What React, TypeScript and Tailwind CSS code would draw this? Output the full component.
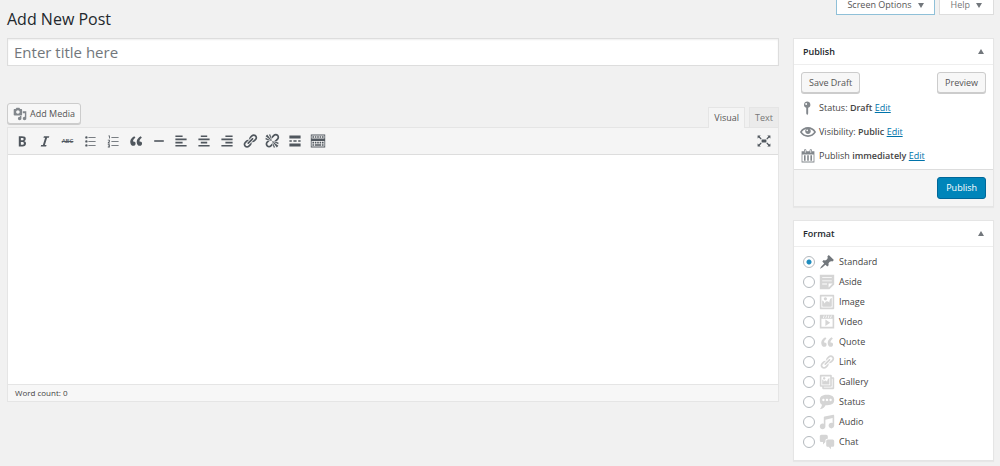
import { useState } from "react";
import type { ReactNode } from "react";

const paths = {
  bold: "M6 4v13h4.54c1.37 0 2.46-.33 3.26-1 .8-.66 1.2-1.58 1.2-2.77 0-.84-.17-1.51-.51-2.01s-.9-.85-1.67-1.03v-.09c.57-.1 1.02-.4 1.36-.9s.51-1.13.51-1.91c0-1.14-.39-1.98-1.17-2.5C12.75 4.26 11.5 4 9.78 4H6zm2.57 5.15V6.26h1.36c.73 0 1.27.11 1.61.32.34.22.51.58.51 1.07 0 .54-.16.92-.47 1.15s-.82.35-1.51.35h-1.5zm0 2.19h1.6c1.44 0 2.16.53 2.16 1.61 0 .6-.17 1.05-.51 1.34s-.86.43-1.57.43H8.57v-3.38z",
  italic: "M14.78 6h-2.13l-2.8 9h2.12l-.62 2H4.6l.62-2h2.14l2.8-9H8.03l.62-2h6.75z",
  ul: "M5.5 7a1.5 1.5 0 1 1 0-3 1.5 1.5 0 0 1 0 3zM8 5h9v1H8zM5.5 12a1.5 1.5 0 1 1 0-3 1.5 1.5 0 0 1 0 3zM8 10h9v1H8zM5.5 17a1.5 1.5 0 1 1 0-3 1.5 1.5 0 0 1 0 3zM8 15h9v1H8z",
  ol: "M4.5 3H6v4H5V4H4zM8 5h9v1H8zM8 10h9v1H8zM8 15h9v1H8zM3.5 8.5H6V11l-1.300 1H6v1H3.500v-1.200L5 10.400V9.500H3.500zM3.500 14H6v4H3.500v-1H5v-.500H4v-1h1V15H3.500z",
  quote: "M9.49 13.22c0-.74-.2-1.38-.61-1.9-.62-.78-1.83-.88-2.53-.72-.29-1.65 1.11-3.75 2.92-4.65L7.88 4c-2.73 1.3-5.42 4.28-4.96 8.05C3.21 14.43 4.59 16 6.54 16c.85 0 1.56-.25 2.12-.75s.83-1.18.83-2.03zm8.05 0c0-.74-.2-1.38-.61-1.9-.63-.78-1.83-.88-2.53-.72-.29-1.65 1.11-3.75 2.92-4.65L15.93 4c-2.73 1.3-5.41 4.28-4.95 8.05.29 2.38 1.66 3.95 3.61 3.95.85 0 1.56-.25 2.12-.75s.83-1.18.83-2.03z",
  hr: "M4 9h12v2H4z",
  left: "M12 5V3H3v2h9zm5 4V7H3v2h14zm-5 4v-2H3v2h9zm5 4v-2H3v2h14z",
  center: "M14 5V3H6v2h8zm3 4V7H3v2h14zm-3 4v-2H6v2h8zm3 4v-2H3v2h14z",
  right: "M17 5V3H8v2h9zm0 4V7H3v2h14zm0 4v-2H8v2h9zm0 4v-2H3v2h14z",
  link: "M17.74 2.76c1.68 1.69 1.68 4.41 0 6.1l-1.53 1.52c-1.12 1.12-2.7 1.47-4.14 1.09l2.62-2.61.76-.77.76-.76c.84-.84.84-2.2 0-3.04-.84-.85-2.2-.85-3.04 0l-.77.76-3.38 3.38c-.37-1.44-.02-3.02 1.1-4.14l1.52-1.53c1.69-1.68 4.42-1.68 6.1 0zM8.59 13.43l5.34-5.34c.42-.42.42-1.1 0-1.52-.44-.43-1.13-.39-1.53 0l-5.33 5.34c-.42.42-.42 1.1 0 1.52.44.43 1.13.39 1.52 0zm-.76 2.29l4.14-4.15c.38 1.44.03 3.02-1.09 4.14l-1.52 1.53c-1.69 1.68-4.41 1.68-6.1 0-1.68-1.68-1.68-4.42 0-6.1l1.53-1.52c1.12-1.12 2.7-1.47 4.14-1.1l-4.14 4.15c-.85.84-.85 2.2 0 3.05.84.84 2.2.84 3.04 0z",
  unlink: "M17.74 2.26c1.68 1.69 1.68 4.41 0 6.1l-1.53 1.52c-.32.33-.69.58-1.08.77L13 10l1.69-1.64.76-.77.76-.76c.84-.84.84-2.2 0-3.04-.84-.85-2.2-.85-3.04 0l-.77.76-.76.76L10 7l-.65-2.14c.19-.38.44-.75.77-1.07l1.52-1.53c1.69-1.68 4.42-1.68 6.1 0zM2 4l8 6-6-8zm4-2l4 8-2-8H6zM2 6l8 4-8-2V6zm7.36 7.69L10 13l.74 2.35-1.38 1.39c-1.69 1.68-4.41 1.68-6.1 0-1.68-1.68-1.68-4.42 0-6.1l1.39-1.38L7 10l-.69.64-1.52 1.53c-.85.84-.85 2.2 0 3.04.84.85 2.2.85 3.04 0zM18 16l-8-6 6 8zm-4 2l-4-8 2 8h2zm4-4l-8-4 8 2v2z",
  more: "M17 7V3H3v4h14zM6 11V9H3v2h3zm6 0V9H8v2h4zm5 0V9h-3v2h3zm0 6v-4H3v4h14z",
  sink: "M19 2v6H1V2zm-1 5V3H2v4zM3 4h2v2H3zM6 4h2v2H6zM9 4h2v2H9zM12 4h2v2h-2zM15 4h2v2h-2zM19 8v10H1V8zm-1 9v-7H2v7zM3 11h2v2H3zM6 11h2v2H6zM9 11h2v2H9zM12 11h2v2h-2zM15 11h2v2h-2zM3 14h2v2H3zM6 14h8v2H6zM15 14h2v2h-2z",
  expand: "M6 3H2v4l1.500-1.500L6 8l1-1-2.500-2.500zM14 3l1.500 1.500L13 7l1 1 2.500-2.500L18 7V3zM14 12l-1 1 2.500 2.500L14 17h4v-4l-1.500 1.500zM6 12l-2.500 2.500L2 13v4h4l-1.500-1.500L7 13zM7 8h6v4H7z",
  media: "M13 11V4c0-.55-.45-1-1-1h-1.67L9 1H5L3.67 3H2c-.55 0-1 .45-1 1v7c0 .55.45 1 1 1h10c.55 0 1-.45 1-1zM7 4.5c1.38 0 2.5 1.12 2.5 2.5S8.38 9.5 7 9.5 4.5 8.38 4.5 7 5.62 4.5 7 4.5zM14 6h5v10.5c0 1.38-1.12 2.5-2.5 2.5S14 17.88 14 16.5s1.12-2.5 2.5-2.5c.17 0 .34.02.5.05V9h-3V6zm-4 8.05V13h2v3.5c0 1.38-1.12 2.5-2.5 2.5S7 17.88 7 16.5 8.12 14 9.5 14c.17 0 .34.02.5.05z",
  status: "M9 2a4 4 0 0 1 1.200 7.800V17L9 19l-1.200-2V9.800A4 4 0 0 1 9 2zM7.700 3.800a1.200 1.200 0 1 0 0 2.400 1.200 1.200 0 0 0 0-2.400z",
  eye: "M19.7 9.4C17.7 6 14 3.9 10 3.9S2.3 6 .3 9.4L0 10l.3.6c2 3.4 5.7 5.5 9.7 5.5s7.7-2.1 9.7-5.5l.3-.6-.3-.6zM10 14.1c-3.1 0-6-1.600-7.700-4.100C3.600 8 5.700 6.600 8 6.100c-.9.6-1.5 1.7-1.500 2.900 0 1.900 1.600 3.500 3.500 3.500s3.500-1.600 3.500-3.500c0-1.200-.6-2.300-1.500-2.900 2.300.5 4.400 1.900 5.700 3.900-1.700 2.500-4.600 4.100-7.700 4.100zM9 7a1 1 0 1 0 0 2 1 1 0 0 0 0-2z",
  calendar: "M15 4h3v14H2V4h3V3c0-.83.67-1.5 1.5-1.5S8 2.170 8 3v1h4V3c0-.83.67-1.5 1.5-1.5S15 2.170 15 3v1zM6 3v2.500c0 .28.22.5.5.5s.5-.22.5-.5V3c0-.28-.22-.5-.5-.5S6 2.720 6 3zm7 0v2.500c0 .28.22.5.5.5s.5-.22.5-.5V3c0-.28-.22-.5-.5-.5s-.5.22-.5.5zm4 14V8H3v9h14zM7 16V9H5v7h2zm4 0V9H9v7h2zm4 0V9h-2v7h2z",
  pin: "M10.44 3.02l1.82-1.82 6.36 6.35-1.83 1.82c-1.05-.68-2.48-.57-3.41.36l-.75.75c-.92.93-1.04 2.35-.35 3.41l-1.83 1.82-2.41-2.41-2.8 2.79c-.42.42-3.38 2.71-3.8 2.29s1.86-3.39 2.28-3.81l2.79-2.79L4.1 9.36l1.83-1.82c1.05.69 2.48.57 3.4-.36l.75-.75c.93-.92 1.05-2.35.36-3.41z",
  aside: "M1 1h18v12l-6 6H1V1zm3 3v1h12V4H4zm0 4v1h12V8H4zm6 5v-1H4v1h6zm2 4l5-5h-5v5z",
  image: "M2.25 1h15.5c.69 0 1.25.56 1.25 1.25v15.5c0 .69-.56 1.25-1.25 1.25H2.25C1.56 19 1 18.44 1 17.75V2.25C1 1.56 1.56 1 2.25 1zM17 17V3H3v14h14zM10 6c0-1.1-.9-2-2-2s-2 .9-2 2 .9 2 2 2 2-.9 2-2zm3 5s0-6 3-6v10c0 .55-.45 1-1 1H5c-.55 0-1-.45-1-1V8c2 0 3 4 3 4s1-3 3-3 3 2 3 2z",
  video: "M2 1h16c.55 0 1 .45 1 1v16l-18-.02V2c0-.55.45-1 1-1zm4 1L5 5h1l1-3H6zm4 0H9L8 5h1zm3 0h-1l-1 3h1zm3 0h-1l-1 3h1zm1 14V6H3v10h14zM8 7l6 4-6 4V7z",
  gallery: "M16 4h1.96c.57 0 1.04.47 1.04 1.04v12.92c0 .57-.47 1.04-1.04 1.04H5.04C4.47 19 4 18.53 4 17.96V16H2.04C1.47 16 1 15.53 1 14.96V2.04C1 1.47 1.47 1 2.04 1h12.92c.57 0 1.04.47 1.04 1.04V4zM3 14h11V3H3v11zm5-8.5C8 4.67 7.33 4 6.5 4S5 4.67 5 5.5 5.67 7 6.5 7 8 6.33 8 5.5zm2 4.5s1-5 3-5v8H4V7c2 0 2 3 2 3s.33-2 2-2 2 2 2 2zm7 7V6h-1v8.96c0 .57-.47 1.04-1.04 1.04H6v1h11z",
  bubble: "M10 1c7 0 9 2.91 9 6.5S17 14 10 14c-.65 0-1.26-.03-1.85-.08C7.29 15.86 5.22 18.57 1 19c1.41-.95 2.27-3.24 2.77-5.45C1.58 12.47 1 10.13 1 7.5 1 3.91 3 1 10 1zM5.5 9C6.33 9 7 8.33 7 7.5S6.33 6 5.5 6 4 6.67 4 7.5 4.67 9 5.5 9zM10 9c.83 0 1.5-.67 1.5-1.5S10.83 6 10 6s-1.5.67-1.5 1.5S9.17 9 10 9zm4.5 0c.83 0 1.5-.67 1.5-1.5S15.33 6 14.5 6 13 6.67 13 7.5 13.67 9 14.5 9z",
  audio: "M6.99 3.08l11.02-2c.55-.08.99.45.99 1V14.5c0 1.94-1.57 3.5-3.5 3.5S12 16.44 12 14.5c0-1.93 1.57-3.5 3.5-3.5.54 0 1.04.14 1.5.35V5.08l-9 2V16c-.24 1.7-1.74 3-3.5 3C2.57 19 1 17.44 1 15.5 1 13.57 2.57 12 4.5 12c.54 0 1.04.14 1.5.35V4.08c0-.55.44-.91.99-1z",
  chat: "M11 6h-.82C9.07 6 8 7.2 8 8.16V10l-3 3v-3H3c-1.1 0-2-.9-2-2V3c0-1.1.9-2 2-2h6c1.1 0 2 .9 2 2v3zm0 1h6c1.1 0 2 .9 2 2v5c0 1.1-.9 2-2 2h-2v3l-3-3h-1c-1.1 0-2-.9-2-2V9c0-1.1.9-2 2-2z",
};

type IconName = keyof typeof paths;

const Icon = ({ name, className = "h-4 w-4" }: { name: IconName; className?: string }) => (
  <svg viewBox="0 0 20 20" fill="currentColor" fillRule="evenodd" className={`shrink-0 ${className}`} aria-hidden="true">
    <path d={paths[name]} />
  </svg>
);

const tools: { label: string; icon?: IconName }[] = [
  { label: "Bold", icon: "bold" },
  { label: "Italic", icon: "italic" },
  { label: "Strikethrough" },
  { label: "Bulleted list", icon: "ul" },
  { label: "Numbered list", icon: "ol" },
  { label: "Blockquote", icon: "quote" },
  { label: "Horizontal line", icon: "hr" },
  { label: "Align left", icon: "left" },
  { label: "Align center", icon: "center" },
  { label: "Align right", icon: "right" },
  { label: "Insert link", icon: "link" },
  { label: "Remove link", icon: "unlink" },
  { label: "Read more", icon: "more" },
  { label: "Toolbar toggle", icon: "sink" },
];

const formats: { name: string; icon: IconName }[] = [
  { name: "Standard", icon: "pin" },
  { name: "Aside", icon: "aside" },
  { name: "Image", icon: "image" },
  { name: "Video", icon: "video" },
  { name: "Quote", icon: "quote" },
  { name: "Link", icon: "link" },
  { name: "Gallery", icon: "gallery" },
  { name: "Status", icon: "bubble" },
  { name: "Audio", icon: "audio" },
  { name: "Chat", icon: "chat" },
];

const publishRows: { icon: IconName; label: string; value: string }[] = [
  { icon: "status", label: "Status:", value: "Draft" },
  { icon: "eye", label: "Visibility:", value: "Public" },
  { icon: "calendar", label: "Publish", value: "immediately" },
];

const Triangle = ({ up = false }: { up?: boolean }) => (
  <svg viewBox="0 0 6 5" fill="currentColor" className="h-[5px] w-[6px] text-[#72777c]" aria-hidden="true">
    <path d={up ? "M3 0l3 5H0z" : "M0 0h6L3 5z"} />
  </svg>
);

const button = "h-[21px] rounded-[3px] border border-[#ccc] bg-[#f7f7f7] text-[#555] shadow-[0_1px_0_#ccc]";

const Panel = ({ title, children }: { title: string; children: ReactNode }) => (
  <section className="border border-[#e5e5e5] bg-white shadow-[0_1px_1px_rgba(0,0,0,0.04)]">
    <header className="flex h-[26px] items-center justify-between border-b border-[#eee] px-[9px]">
      <h2 className="font-semibold text-[#23282d]">{title}</h2>
      <button type="button" aria-label={`Toggle ${title}`}>
        <Triangle up />
      </button>
    </header>
    {children}
  </section>
);

const Editor = () => (
  <div>
    <div className="mt-[37px] flex items-end justify-between">
      <button type="button" className={`${button} mb-[3px] flex items-center gap-[3px] px-[5px]`}>
        <Icon name="media" className="h-[14px] w-[14px] text-[#82878c]" />
        Add Media
      </button>
      <div className="flex items-end gap-1">
        <button type="button" className="relative -mb-px h-[21px] border border-b-0 border-[#e5e5e5] bg-[#f5f5f5] px-[5px] text-[#555]">Visual</button>
        <button type="button" className="h-5 border border-b-0 border-[#e5e5e5] bg-[#ebebeb] px-[5px] text-[#777]">Text</button>
      </div>
    </div>
    <div className="border border-[#e5e5e5] bg-white">
      <div className="flex h-[27px] items-center justify-between border-b border-[#ddd] bg-[#f5f5f5] px-1.5 text-[#50575e]">
        <div className="flex w-[312px] justify-between">
          {tools.map((tool) => (
            <button key={tool.label} type="button" aria-label={tool.label} className="flex h-4 w-4 items-center justify-center">
              {tool.icon ? <Icon name={tool.icon} /> : <span className="text-[6px] font-semibold line-through">ABC</span>}
            </button>
          ))}
        </div>
        <button type="button" aria-label="Distraction-free writing mode">
          <Icon name="expand" />
        </button>
      </div>
      <textarea aria-label="Post content" className="block h-[229px] w-full resize-none p-2 outline-none" />
      <div className="h-[17px] border-t border-[#e5e5e5] bg-[#f7f7f7] px-[7px] text-[8px] leading-4">Word count: 0</div>
    </div>
  </div>
);

export default function App() {
  const [format, setFormat] = useState("Standard");

  return (
    <div className="min-h-screen bg-[#f1f1f1] pr-1.5 pb-1.5 pl-[7px] font-['Open_Sans','Noto_Sans',sans-serif] text-[9px] leading-4 text-[#444]">
      <header className="flex h-[38px] items-start justify-between">
        <h1 className="self-center text-[16px] leading-6 text-[#23282d]">Add New Post</h1>
        <div className="flex gap-1 leading-[10px]">
          <button type="button" className="flex items-center gap-1.5 border border-t-0 border-[#8fc0d8] bg-white px-[10px] pb-1 text-[#555]">
            Screen Options <Triangle />
          </button>
          <button type="button" className="flex items-center gap-1.5 border border-t-0 border-[#ddd] bg-white px-[11px] pb-1 text-[#777]">
            Help <Triangle />
          </button>
        </div>
      </header>

      <div className="flex items-start gap-[14px]">
        <main className="min-w-0 flex-1">
          <input
            type="text"
            aria-label="Post title"
            placeholder="Enter title here"
            className="block h-7 w-full border border-[#ddd] bg-white px-1.5 text-[15px] shadow-[inset_0_1px_2px_rgba(0,0,0,0.07)] outline-none placeholder:text-[#72777c]"
          />
          <Editor />
        </main>

        <aside className="flex w-[201px] shrink-0 flex-col gap-[13px]">
          <Panel title="Publish">
            <div className="flex justify-between px-[7px] pt-[7px]">
              <button type="button" className={`${button} px-[7px]`}>Save Draft</button>
              <button type="button" className={`${button} px-[7px]`}>Preview</button>
            </div>
            <ul className="mt-[3px] pb-px pl-[6px]">
              {publishRows.map((row) => (
                <li key={row.label} className="flex h-6 items-center gap-[3px]">
                  <Icon name={row.icon} className="h-4 w-4 text-[#82878c]" />
                  <span>
                    {row.label} <b className="font-semibold">{row.value}</b>{" "}
                    <a href="#" className="text-[#0073aa] underline">Edit</a>
                  </span>
                </li>
              ))}
            </ul>
            <div className="flex justify-end border-t border-[#ddd] bg-[#f5f5f5] p-[7px]">
              <button type="button" className="h-[22px] rounded-[3px] border border-[#006799] bg-[#0085ba] px-2 text-white">Publish</button>
            </div>
          </Panel>

          <Panel title="Format">
            <div className="pt-[5px] pb-2 pl-[9px]">
              {formats.map(({ name, icon }) => (
                <label key={name} className="flex h-5 items-center">
                  <input
                    type="radio"
                    name="format"
                    checked={format === name}
                    onChange={() => setFormat(name)}
                    className="mr-1 h-3 w-3 appearance-none rounded-full border border-[#b4b9be] bg-white checked:bg-[radial-gradient(circle,#1e8cbe_2px,white_3px)]"
                  />
                  <Icon name={icon} className={name === "Standard" ? "h-4 w-4 text-[#72777c]" : "h-4 w-4 text-[#d5d5d5]"} />
                  <span className="ml-1">{name}</span>
                </label>
              ))}
            </div>
          </Panel>
        </aside>
      </div>
    </div>
  );
}
